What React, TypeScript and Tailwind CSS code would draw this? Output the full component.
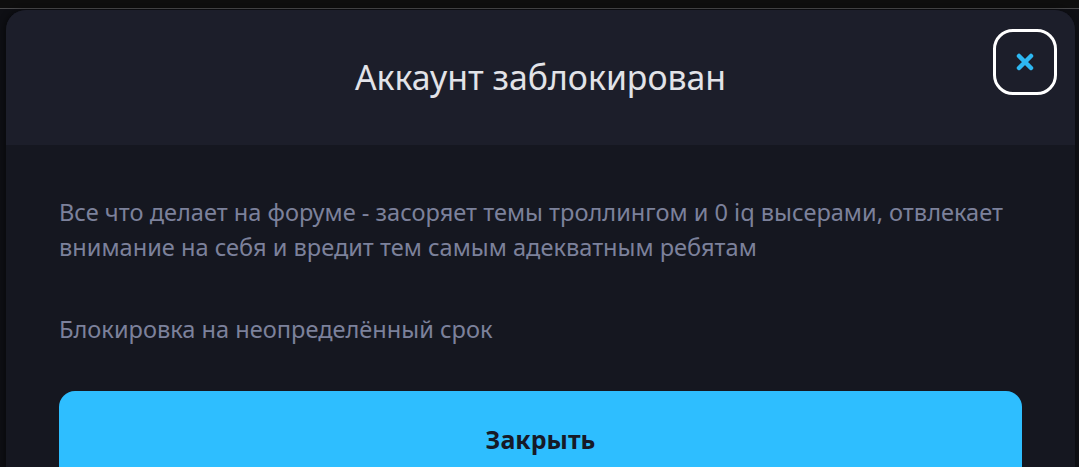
import React from 'react';

const font = { fontFamily: '"Noto Sans", "Open Sans", sans-serif' };

function CloseIcon() {
  return (
    <svg width="20" height="20" viewBox="0 0 20 20" fill="none">
      <path d="M4 4l12 12M16 4L4 16" stroke="#2db8f2" strokeWidth="4.5" strokeLinecap="round" />
    </svg>
  );
}

export default function App() {
  return (
    <div className="flex h-[467px] w-[1079px] flex-col overflow-hidden bg-[#0e0f14]" style={font}>
      {/* Top chrome */}
      <div className="h-[8px] shrink-0 bg-[#0e0e0e]" />
      <div className="h-px shrink-0 bg-[#4a4a4c]" />

      <div className="flex min-h-0 flex-1 pl-[6px] pr-[4px] pt-px">
        <div className="flex flex-1 flex-col overflow-hidden rounded-t-[20px] bg-[#151720] shadow-[-2px_0_6px_rgba(0,0,0,0.4)]">
          {/* Header */}
          <div className="relative flex h-[135px] shrink-0 items-center justify-center bg-[#1c1e2a]">
            <h2 className="text-[33.8px] font-normal text-[#e2e3e8]">Аккаунт заблокирован</h2>
            <button className="absolute right-[18px] top-[19px] flex h-[66px] w-[64px] items-center justify-center rounded-[20px] border-[3px] border-white">
              <CloseIcon />
            </button>
          </div>

          {/* Body */}
          <div className="flex flex-col px-[53px] pt-[50px]">
            <p className="text-[23.6px] leading-[35px] text-[#7c819b]">
              Все что делает на форуме - засоряет темы троллингом и 0 iq высерами, отвлекает внимание на себя и вредит тем самым адекватным ребятам
            </p>
            <p className="mt-[47px] text-[23.6px] leading-[35px] text-[#7c819b]">Блокировка на неопределённый срок</p>
            <button className="mt-[44px] flex h-[98px] w-full shrink-0 items-center justify-center rounded-[16px] bg-[#2ebeff] text-[25px] font-bold text-[#161a28]">
              Закрыть
            </button>
          </div>
        </div>
      </div>
    </div>
  );
}
